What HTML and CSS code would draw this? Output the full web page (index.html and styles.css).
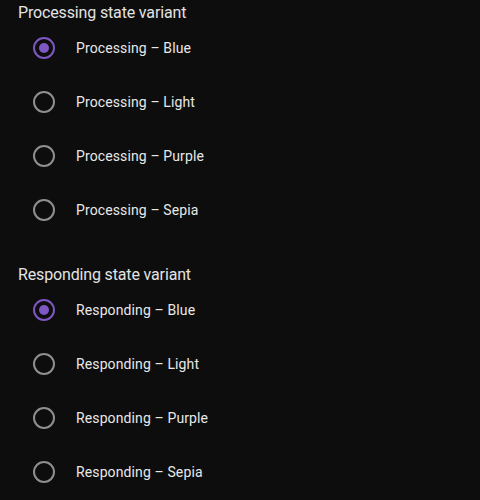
FILE: index.html
```html
<!DOCTYPE html>
<html>
<head>
<meta charset="utf-8">
<link rel="stylesheet" href="styles.css">
</head>
<body>
<section class="group">
  <h2 class="title">Processing state variant</h2>
  <div class="options">
    <label class="option"><span class="radio checked"></span><span class="text">Processing – Blue</span></label>
    <label class="option"><span class="radio"></span><span class="text">Processing – Light</span></label>
    <label class="option"><span class="radio"></span><span class="text">Processing – Purple</span></label>
    <label class="option"><span class="radio"></span><span class="text">Processing – Sepia</span></label>
  </div>
</section>
<section class="group">
  <h2 class="title">Responding state variant</h2>
  <div class="options">
    <label class="option"><span class="radio checked"></span><span class="text">Responding – Blue</span></label>
    <label class="option"><span class="radio"></span><span class="text">Responding – Light</span></label>
    <label class="option"><span class="radio"></span><span class="text">Responding – Purple</span></label>
    <label class="option"><span class="radio"></span><span class="text">Responding – Sepia</span></label>
  </div>
</section>
</body>
</html>
```

FILE: styles.css
```css
html, body {
  margin: 0;
  padding: 0;
  background: #0d0d0d;
  font-family: Roboto, "Noto Sans", sans-serif;
  color: #e3e3e3;
}
body {
  display: flex;
  flex-direction: column;
  gap: 32px;
  padding-left: 18px;
}
.title {
  margin: 0;
  padding-top: 1px;
  font-size: 16px;
  font-weight: 400;
  line-height: 24px;
  letter-spacing: -0.15px;
  color: #e3e3e3;
}
.options {
  display: flex;
  flex-direction: column;
  gap: 14px;
  padding-top: 3px;
  padding-left: 15px;
}
.option {
  display: flex;
  align-items: center;
  height: 40px;
  gap: 21px;
}
.radio {
  box-sizing: border-box;
  width: 22px;
  height: 22px;
  border-radius: 50%;
  border: 2px solid #8f8f8f;
  display: flex;
  align-items: center;
  justify-content: center;
}
.radio.checked {
  border-color: #7e57c2;
}
.radio.checked::after {
  content: "";
  width: 10px;
  height: 10px;
  border-radius: 50%;
  background: #7e57c2;
}
.text {
  font-size: 14px;
  font-weight: 400;
  line-height: 20px;
  letter-spacing: 0.12px;
  color: #e8e8e8;
}
```
